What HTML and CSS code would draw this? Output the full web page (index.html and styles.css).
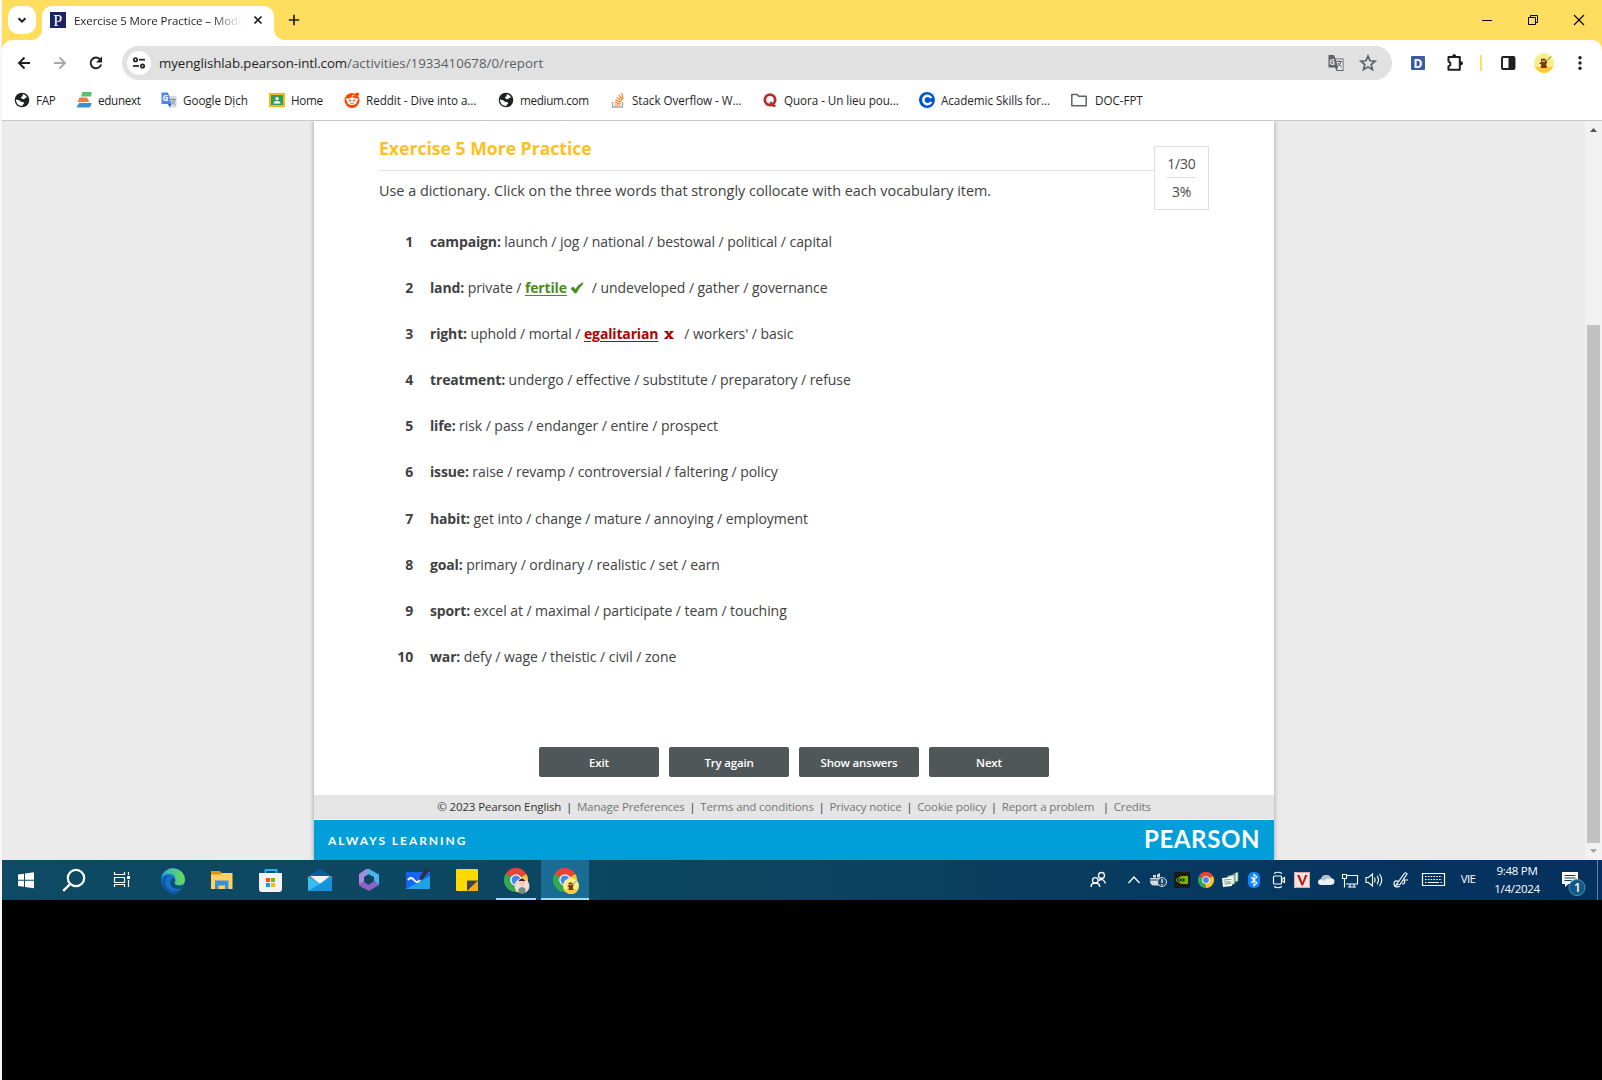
FILE: index.html
```html
<!DOCTYPE html>
<html lang="en">
<head>
<meta charset="utf-8">
<title>Exercise 5 More Practice</title>
<link rel="stylesheet" href="styles.css">
</head>
<body>
<svg class="defs" width="0" height="0" aria-hidden="true">
  <symbol id="chrome" viewBox="0 0 24 24">
    <path fill="#ea4335" d="M12 12 1.6 6A12 12 0 0 1 22.4 6Z"/>
    <path fill="#fbc02d" d="M12 12 22.4 6A12 12 0 0 1 12 24Z"/>
    <path fill="#34a853" d="M12 12 12 24A12 12 0 0 1 1.6 6Z"/>
    <path fill="#ea4335" d="M12 6H22.4L12 6.5Z"/>
    <path fill="#34a853" d="M1.6 6 6.8 15 12 12Z"/>
    <path fill="#fbc02d" d="M17.2 15 12 24 11 17Z"/>
    <circle cx="12" cy="12" r="5.8" fill="#fff"/>
    <circle cx="12" cy="12" r="4.5" fill="#4285f4"/>
  </symbol>
  <symbol id="globe" viewBox="0 0 16 16">
    <circle cx="8" cy="8" r="7.3" fill="#202124"/>
    <path d="M8.600 2.200c2 .2 3.700 1.500 4.500 3.200l-1.800.3-1.200 1.500-2.500-.4-.6-1.800 1.700-.8zM1.900 7.500l3.300.7 1.600 1.600 2.400.2 1 1.300-1.400 1.400-.4 1.200C4.800 14 2 11.400 1.900 7.500z" fill="#fff"/>
  </symbol>
  <symbol id="gorilla" viewBox="0 0 20 20">
    <circle cx="10" cy="10" r="10" fill="#f7ef8c"/>
    <path d="M.8 13.800h18.400A10 10 0 0 1 .8 13.800z" fill="#fbcb3c"/>
    <path d="m11 9.500 6-6" stroke="#8a6a3a"/>
    <path d="M6.800 6.300q2.700-1.800 5 0l.2 2 1.500.8-1.300 1.900.8 4H6.800l.5-3.600-2.300-.9 2.300-1.500z" fill="#7a3a12"/>
    <path d="M8 7.300h3v1.700H8z" fill="#d9a066"/>
  </symbol>
</svg>

<div class="screen">
<header class="tabstrip">
  <div class="tab-search"><svg width="12" height="12" viewBox="0 0 12 12"><path d="M2.500 4.200 6 7.600l3.500-3.400" fill="none" stroke="#1f1f1f" stroke-width="2"/></svg></div>
  <div class="tab">
    <svg width="16" height="16" viewBox="0 0 16 16"><path fill="#1b2460" d="M0 0h16v16H0z"/><text x="3.200" y="13.800" class="pearson-p">P</text></svg>
    <span class="tab-title">Exercise 5 More Practice – Mode</span>
    <svg width="10" height="10" viewBox="0 0 10 10"><path d="m1.500 1.500 7 7m0-7-7 7" stroke="#1f1f1f" stroke-width="1.700"/></svg>
  </div>
  <svg class="newtab" width="12" height="12" viewBox="0 0 12 12"><path d="M6 .8v10.400M.8 6h10.400" stroke="#1f1f1f" stroke-width="1.700"/></svg>
  <div class="window-controls">
    <svg width="46" height="40"><path d="M18 20.500h10" stroke="#000"/></svg>
    <svg width="46" height="40"><path d="M18.500 17.500h7v7h-7zM20.500 17.500v-2h7v7h-2" fill="none" stroke="#000"/></svg>
    <svg width="46" height="40"><path d="m18 15 10 10m0-10L18 25" stroke="#000" stroke-width="1.100"/></svg>
  </div>
</header>

<nav class="toolbar">
  <svg class="nav-btn" width="36" height="36" viewBox="0 0 36 36"><path d="M24 18H13m5.500-5.500L13 18l5.500 5.500" fill="none" stroke="#1f1f1f" stroke-width="1.900"/></svg>
  <svg class="nav-btn" width="36" height="36" viewBox="0 0 36 36"><path d="M12 18h11m-5.500-5.500L23 18l-5.500 5.500" fill="none" stroke="#a8a8a8" stroke-width="1.900"/></svg>
  <svg class="nav-btn" width="36" height="36" viewBox="0 0 36 36"><path d="M22.300 14.500A5.400 5.400 0 1 0 23.200 19.500" fill="none" stroke="#1f1f1f" stroke-width="1.900"/><path d="M24 11.500v6h-6z" fill="#1f1f1f"/></svg>
  <div class="omnibox">
    <svg class="site-info" width="24" height="24" viewBox="0 0 24 24"><circle cx="12" cy="12" r="12" fill="#fff"/><g fill="none" stroke="#1f1f1f" stroke-width="1.700"><circle cx="8.500" cy="8.700" r="1.700"/><path d="M12 8.700h6"/><circle cx="15.500" cy="15" r="1.700"/><path d="M6 15h6"/></g></svg>
    <span class="url"><span class="host">myenglishlab.pearson-intl.com</span><span class="path">/activities/1933410678/0/report</span></span>
    <svg width="18" height="18" viewBox="0 0 18 18"><path d="M1.500 1H7l1.500 3.500h8V17H9.500L8 13.500H1.500z" fill="#5f6368"/><path d="M9 5.300h6.700v10.800h-5.700l1-2.600z" fill="#e1e1e1"/><path d="M10 7.500h5M12.300 6.500v1M14 7.500q-.5 3-3.500 4.500M11 9l3.500 4" stroke="#5f6368" fill="none"/><text x="2.200" y="10.800" class="g-glyph">G</text></svg>
    <svg class="star" width="18" height="18" viewBox="0 0 18 18"><path d="m9 2 2 4.800 5.200.4-4 3.400 1.300 5.100L9 12.900l-4.500 2.800 1.300-5.100-4-3.400 5.200-.4z" fill="none" stroke="#5f6368" stroke-width="1.700"/></svg>
  </div>
  <div class="actions">
    <svg width="36" height="24" viewBox="0 0 36 24"><rect x="11" y="5" width="14" height="14" rx="1" fill="#3b5ba5"/><text x="13.400" y="16.500" class="d-glyph">D</text></svg>
    <svg width="36" height="24" viewBox="0 0 36 24"><path d="M12.500 6h11.300v12.800H12.500v-3.500q2-.6 2-2.400t-2-2.400z" fill="none" stroke="#1f1f1f" stroke-width="2" stroke-linejoin="round"/><path d="M16 5.500q.3-2.500 2.200-2.500t2.200 2.500zM24 10q3 .3 3 2.300t-3 2.300z" fill="#1f1f1f"/></svg>
    <svg width="18" height="24" viewBox="0 0 18 24"><path d="M8 4h2v16H8z" fill="#ffdd5e"/></svg>
    <svg width="36" height="24" viewBox="0 0 36 24"><rect x="12" y="6" width="12.500" height="12" rx="1" fill="none" stroke="#1f1f1f" stroke-width="1.900"/><path d="M18.500 6h6v12h-6z" fill="#1f1f1f"/></svg>
    <svg width="36" height="24" viewBox="0 0 36 24"><use href="#gorilla" x="8" y="2" width="20" height="20"/></svg>
    <svg width="36" height="24" viewBox="0 0 36 24"><g fill="#1f1f1f"><circle cx="18" cy="6.800" r="1.700"/><circle cx="18" cy="12" r="1.700"/><circle cx="18" cy="17.200" r="1.700"/></g></svg>
  </div>
</nav>

<nav class="bookmarks">
  <a><svg width="16" height="16"><use href="#globe"/></svg><span class="tight">FAP</span></a>
  <a><svg width="16" height="16" viewBox="0 0 16 16"><path d="M6.500 0H15q1 0 .6 1.500L15 4.500H5z" fill="#5bbf74"/><path d="M3.500 5.500h7.500l2.500 4.500H1.500z" fill="#f47b42"/><path d="M3 11h12.500q-.5 4.500-3 4.500H.5z" fill="#3b8fd0"/></svg><span class="tight">edunext</span></a>
  <a><svg width="16" height="16" viewBox="0 0 16 16"><path d="M6 4h9.500v11.500H8.500z" fill="#d5d8dc"/><path d="M.5.500h6.500l3.500 11.500H.5z" fill="#4a86ee"/><path d="m8.500 15.500 2-3.500H7z" fill="#2c5fc4"/><path d="M9.800 7.500h5M12.300 6.500v1M14 7.500q-.7 3-3.500 4.500M11 9l3.500 4" stroke="#78909c" fill="none"/><text x="1.600" y="9" class="g-white">G</text></svg><span>Google Dịch</span></a>
  <a><svg width="16" height="16" viewBox="0 0 16 16"><path d="M0 1h16v14H0z" fill="#f5ba15"/><path d="M2 3h12v10H2z" fill="#2f9e5b"/><circle cx="8" cy="6.700" r="1.600" fill="#fff"/><path d="M4.500 11.500q0-2.500 3.500-2.500t3.500 2.500z" fill="#fff"/></svg><span class="tight">Home</span></a>
  <a><svg width="16" height="16" viewBox="0 0 16 16"><circle cx="8" cy="8.500" r="7.500" fill="#ff4500"/><circle cx="13.300" cy="2.300" r="1.800" fill="#ff4500"/><ellipse cx="8" cy="9.300" rx="5" ry="3.700" fill="#fff"/><circle cx="3.200" cy="7.500" r="1.300" fill="#fff"/><circle cx="12.800" cy="7.500" r="1.300" fill="#fff"/><path d="m8 5.800.7-2.800 2.300.5" stroke="#fff" stroke-width=".8" fill="none"/><circle cx="6" cy="8.600" r="1" fill="#ff4500"/><circle cx="10" cy="8.600" r="1" fill="#ff4500"/><path d="M6 10.900q2 1.200 4 0" stroke="#ff4500" fill="none" stroke-width=".8"/></svg><span>Reddit - Dive into a...</span></a>
  <a><svg width="16" height="16"><use href="#globe"/></svg><span class="tight">medium.com</span></a>
  <a><svg width="16" height="16" viewBox="0 0 16 16"><path d="M2.500 10v5h10v-5" fill="none" stroke="#a5a7aa" stroke-width="1.300"/><path d="M4.500 13h6M4.600 10.700l6 .7M5.300 8l5.600 2M6.700 5.300l4.900 3.500M9 2.800l3.400 5M11.800 1l1.300 5.800" stroke="#f48024" stroke-width="1.200"/></svg><span>Stack Overflow - W...</span></a>
  <a><svg width="16" height="16" viewBox="0 0 16 16"><circle cx="8" cy="7.800" r="5.200" fill="none" stroke="#b92b27" stroke-width="2.800"/><path d="m7.500 10 2-.8 1.500 3.500 2.800.5-.3 1.500q-3 1-4.200-1.500z" fill="#b92b27"/></svg><span>Quora - Un lieu pou...</span></a>
  <a><svg width="16" height="16" viewBox="0 0 16 16"><circle cx="8" cy="8" r="8" fill="#0056d2"/><path d="M12.200 6A4.200 4.200 0 1 0 12.200 10" fill="none" stroke="#fff" stroke-width="2.500"/></svg><span>Academic Skills for...</span></a>
  <a class="folder"><svg width="16" height="16" viewBox="0 0 16 16"><path d="M.8 13.700V2.500h5.400l1.500 1.800h7.500v9.400z" fill="none" stroke="#5f6368" stroke-width="1.500" stroke-linejoin="round"/></svg><span>DOC-FPT</span></a>
</nav>

<main class="viewport">
  <section class="sheet">
    <div class="exercise">
      <div class="intro">
        <h1>Exercise 5 More Practice</h1>
        <p>Use a dictionary. Click on the three words that strongly collocate with each vocabulary item.</p>
        <div class="score"><span>1/30</span><span>3%</span></div>
      </div>
      <ol class="items">
        <li><b class="num">1</b><b>campaign:</b> launch / jog / national / bestowal / political / capital</li>
        <li><b class="num">2</b><b>land:</b> private / <b class="right">fertile</b><svg class="tick" width="14" height="12" viewBox="0 0 14 12"><path d="M1 6.500 3.200 5l2.300 2.500Q8 3 12.500.700L13 1.800Q9 5.500 6.200 11H4.800z" fill="#4c8a1e" stroke="#4c8a1e" stroke-width=".7"/></svg>/ undeveloped / gather / governance</li>
        <li><b class="num">3</b><b>right:</b> uphold / mortal / <b class="wrong">egalitarian</b><svg class="cross" width="10" height="10" viewBox="0 0 10 10"><path d="M.3 1h4v1L5 3.200 6 2V1h3.500v1.200h-.8L6.200 5l2.500 2.800h1V9H5.500V8L4.800 6.800 3.700 8v1H.3V7.800h.8L3.700 5 1.300 2.200h-1z" fill="#b20000"/></svg>/ workers' / basic</li>
        <li><b class="num">4</b><b>treatment:</b> undergo / effective / substitute / preparatory / refuse</li>
        <li><b class="num">5</b><b>life:</b> risk / pass / endanger / entire / prospect</li>
        <li><b class="num">6</b><b>issue:</b> raise / revamp / controversial / faltering / policy</li>
        <li><b class="num">7</b><b>habit:</b> get into / change / mature / annoying / employment</li>
        <li><b class="num">8</b><b>goal:</b> primary / ordinary / realistic / set / earn</li>
        <li><b class="num">9</b><b>sport:</b> excel at / maximal / participate / team / touching</li>
        <li><b class="num">10</b><b>war:</b> defy / wage / theistic / civil / zone</li>
      </ol>
      <div class="buttons"><button>Exit</button><button>Try again</button><button>Show answers</button><button>Next</button></div>
    </div>
    <div class="legal"><span>© 2023 Pearson English</span><i>|</i><a>Manage Preferences</a><i>|</i><a>Terms and conditions</a><i>|</i><a>Privacy notice</a><i>|</i><a>Cookie policy</a><i>|</i><a>Report a problem</a><i class="wide">|</i><a>Credits</a></div>
    <div class="brand"><span class="tagline">ALWAYS LEARNING</span><span class="logo">PEARSON</span></div>
  </section>
  <div class="scrollbar">
    <svg width="17" height="17"><path d="m5 11 3.500-4 3.500 4z" fill="#505050"/></svg>
    <div class="thumb"></div>
    <svg width="17" height="17"><path d="m5 6 3.500 4L12 6z" fill="#a3a3a3"/></svg>
  </div>
</main>

<footer class="taskbar">
  <div class="apps">
    <svg width="48" height="40"><path d="m16 14.500 6-.8v6h-6zM23 13.500l9-1.300v7.500h-9zM16 20.700h6v6l-6-.8zM23 20.700h9v7.500l-9-1.300z" fill="#fff"/></svg>
    <svg width="48" height="40"><circle cx="26" cy="18" r="8.200" fill="none" stroke="#fff" stroke-width="2.200"/><path d="m20.200 24-7 6.800" stroke="#fff" stroke-width="2.400"/></svg>
    <svg width="48" height="40"><path d="M16.500 12v2.500h10V12M16.500 27v-2.500h10V27M16.500 17.500h10v5h-10zM30.500 12v3M30.500 20v7" fill="none" stroke="#fff" stroke-width="1.200"/><path d="M29 16h3v3h-3z" fill="#fff"/></svg>
    <svg width="52" height="40" viewBox="0 0 52 40"><defs><linearGradient id="e1" x1="0" x2="1"><stop stop-color="#2aa8e0"/><stop offset="1" stop-color="#6be04a"/></linearGradient></defs><circle cx="27" cy="20" r="12" fill="#1672c9"/><path d="M15.200 18A12 12 0 0 1 39 20q0 5-6 5-4.500 0-4.500-2 1.500-1.500 1-4-1-5-7-5-5 .2-7.300 4z" fill="url(#e1)"/><path d="M22 15.500q-6 8 .5 13.500 6 4 13.500-.5-7 11.500-17 1Q12 18 22 15.500z" fill="#0c59a4"/><path d="M28.500 23q0 3 5.500 3 3.500-.3 4.300-1.800l-2.300 4q-9 2.500-11.500-4-1-5 3-6.200 2.500 2.500 1 5z" fill="#104d77"/></svg>
    <svg width="48" height="40"><path d="M13 11h9l2 2.500h10V16H13z" fill="#d9960f"/><path d="M13 14.500h9l2-1.500h10.500v16H13z" fill="#fdd262"/><path d="M17 29v-8.500h13.500V29h-3.500v-3.500h-6.500V29z" fill="#3f8fd6"/></svg>
    <svg width="49" height="40"><path d="M19.500 15v-5h11v5" fill="none" stroke="#25b4ec" stroke-width="1.800"/><path d="M13 13h23v16q0 3-3 3H16q-3 0-3-3z" fill="#f3f3f3"/><path d="M20 18h4v4h-4z" fill="#f25022"/><path d="M25 18h4v4h-4z" fill="#7fba00"/><path d="M20 23h4v4h-4z" fill="#00a4ef"/><path d="M25 23h4v4h-4z" fill="#ffb900"/></svg>
    <svg width="49" height="40"><path d="m13 16 12-7 12 7-12 8z" fill="#0c59a4"/><path d="M15 16h20l-10 8z" fill="#f2f2f2"/><path d="m13 16 12 7.500L37 16v15H13z" fill="#35bdf0"/><path d="m15 16 10 7.500L35 16z" fill="#f2f2f2"/><path d="m13 31 24-14v14z" fill="#1493df"/></svg>
    <svg width="49" height="40"><path d="m22 9-7 5v11l5 3.500V17l6-3.500V9z" fill="#a58be0"/><path d="m25 9 10 5.500V25l-5-3v-5L22 13z" fill="#49b5ea"/><path d="m15 25.500 10 5.500 10-6-4.500-4.500-6 4.500-5-3.500-4.500 2z" fill="#8a63c4"/><path d="m20.500 17 4-2.500 5 3v3.500l-4.500 3-4.500-2.500z" fill="#0e4661"/></svg>
    <svg width="49" height="40"><path d="M13 12h24v17H13z" fill="#1764ee"/><path d="M13 29h24V16z" fill="#1fa3e6"/><path d="M15 20q3-4 6 0t6 0" fill="none" stroke="#fff" stroke-width="2"/><path d="m33 8 3.500 2-6.500 9-3.500 1 .5-3.500z" fill="#30303a"/></svg>
    <svg width="49" height="40"><rect x="14" y="9" width="22" height="22" rx="1" fill="#ffd900"/><path d="m36 20-11 11h10q1 0 1-1z" fill="#f5ac0d"/><path d="M25 20.500h11L25 31z" fill="#41414a"/></svg>
    <div class="app open"><svg width="40" height="38"><use href="#chrome" x="8" y="8" width="24" height="24"/><circle cx="26" cy="26" r="7.500" fill="#f4dad6"/><circle cx="26" cy="22.500" r="3" fill="#f6c6b4"/><path d="M22.500 21q3.500-5 7 0z" fill="#2b2524"/><path d="M22.500 33v-4q3.500-4 7 0v4z" fill="#6f8f80"/></svg></div>
    <div class="app active"><svg width="48" height="38"><use href="#chrome" x="12" y="8" width="24" height="24"/><use href="#gorilla" x="22" y="18" width="16" height="16"/></svg></div>
  </div>
  <div class="tray">
    <svg class="people" width="36" height="40" viewBox="0 0 36 40"><g fill="none" stroke="#fff" stroke-width="1.300"><circle cx="21.500" cy="15.500" r="3"/><path d="M18.500 20.500q5-3 7 3"/><circle cx="15.300" cy="20.500" r="2.800"/><path d="M11 27q0-4 4.300-4t4.500 4"/></g></svg>
    <svg width="24" height="40"><path d="m6.500 23 5.500-6 5.500 6" fill="none" stroke="#fff" stroke-width="1.300"/></svg>
    <svg width="24" height="40"><path d="M4 18h11v1.500H4zM4 20.500h10v2l-1 3H7q-3-1-3-5zM7 15h3v2.500H7zM11 14.500l3-1.500v4.500h-3z" fill="#d5dce0"/><circle cx="16" cy="22" r="4.500" fill="#1b4963" stroke="#d5dce0"/><path d="M16 19v4m0 1v1.200" stroke="#fff" stroke-width="1.200"/></svg>
    <svg width="24" height="40"><path d="M4 12h16v16H4z" fill="#1b1b1b"/><path d="M10.500 16H18v8h-7.500z" fill="#76b900"/><path d="M6 20q4.500-5.500 10 0-5.500 5.500-10 0z" fill="#1b1b1b" stroke="#76b900"/><circle cx="11" cy="20" r="1.700" fill="none" stroke="#76b900"/></svg>
    <svg width="24" height="40"><use href="#chrome" x="4" y="12" width="16" height="16"/></svg>
    <svg width="24" height="40"><path d="m15 14 5-2v9l-5 2z" fill="#e8f5ea" stroke="#3c9a5a" stroke-width=".7"/><path d="m9 16 8-2v10l-4 1z" fill="#c9ded0" stroke="#244a3a" stroke-width=".7"/><path d="m4 18 11-1-1 9-9 1z" fill="#fff"/><path d="m5.500 20 8-.5M6 22h7.500M6.500 24l6.500-.5" stroke="#6c9b82"/></svg>
    <svg width="24" height="40"><rect x="6" y="12" width="12" height="16" rx="5" fill="#0a84ff"/><path d="m9 17 6 6-3 2.800V14.200l3 2.800-6 6" fill="none" stroke="#fff" stroke-width="1.100"/></svg>
    <svg width="24" height="40"><rect x="7.500" y="16" width="8" height="8" rx="1" fill="none" stroke="#fff" stroke-width="1.200"/><path d="m15.500 19.500 3-2v5l-3-2M8 13.500q4-2.500 8 0M8 26.500q4 2.500 8 0" fill="none" stroke="#fff" stroke-width="1.200"/></svg>
    <svg width="24" height="40"><path d="M4 12h16v16H4z" fill="#fbe5e1"/><path d="M4.500 12.500h15v15h-15z" fill="none" stroke="#e3a79f"/><path d="M7 15h2.500l3 7.500L15 15h2.500L13 25.500h-1.500z" fill="#c01818"/></svg>
    <svg width="24" height="40"><path d="M7 25q-3-.5-3-3t3-3q1-4 5-4t5 3q3.500.5 3.500 3.500T17 25z" fill="#eef2f5"/><path d="M7 19.500q2-5 6.500-4 3 1 3.500 3.500-5-1.500-7 2z" fill="#aebccb"/></svg>
    <svg width="24" height="40"><path d="M8 15.500h11.500v8.500H8M12 24v3m4-3v3m-6 0h8M4.500 14.500h4v4h-4zM6.500 18.500v9" fill="none" stroke="#fff" stroke-width="1.100"/></svg>
    <svg width="24" height="40"><path d="M4 17.500h2.500l4-3.500v12l-4-3.500H4zM12.500 17.500q1.500 2.500 0 5M15 15.800q3 4.200 0 8.400M17.500 14q4.500 6 0 12" fill="none" stroke="#fff" stroke-width="1.100"/></svg>
    <svg width="32" height="40"><path d="m10 25 8-11q2-2.500 3 0L14 24.500zM12 21q-4-1-4 3t6 2.500M16 24q4 0 2-4h4" fill="none" stroke="#fff" stroke-width="1.200"/></svg>
    <svg width="30" height="40"><path d="M4.500 13.500h22v12h-22z" fill="none" stroke="#fff" stroke-width="1.200"/><path d="M7 16.500h17M7 19.500h17" stroke="#fff" stroke-width="1.200" stroke-dasharray="1.600 1.200"/><path d="M7 22.500h1.500m1.500 0h11m1.500 0H24" stroke="#fff" stroke-width="1.200"/></svg>
    <span class="lang">VIE</span>
    <div class="clock"><span>9:48 PM</span><span>1/4/2024</span></div>
    <svg class="notices" width="36" height="40"><path d="M11 12h16v12H17.500L14 27v-3h-3z" fill="#fff"/><path d="M13.500 15.500h11M13.500 18h11M13.500 20.500h7" stroke="#0a3b63"/><circle cx="26" cy="27.500" r="8" fill="#125884" stroke="#4f93b8"/><text x="23" y="31.800" class="count">1</text></svg>
    <i class="peek"></i>
  </div>
</footer>
</div>
</body>
</html>
```
FILE: styles.css
```css
*{box-sizing:border-box}
body{margin:0;background:#000;font-family:"Open Sans","Noto Sans",sans-serif;color:#1f1f1f;overflow:hidden}
svg{display:block;flex:none}
.defs{position:absolute}
.screen{width:1602px;height:1080px;border-left:2px solid #f7f7f7;display:flex;flex-direction:column}

.tabstrip{height:50px;margin-bottom:-10px;background:#ffdd5e;display:flex;align-items:flex-start;padding-left:6px}
.tab-search{width:28px;height:28px;margin-top:6px;border-radius:10px;background:#fff;display:flex;align-items:center;justify-content:center}
.tab{position:relative;width:232px;height:34px;margin:6px 0 0 6px;padding:0 11px 6px 8px;border-radius:10px 10px 0 0;background:#fff;display:flex;align-items:center}
.tab::before,.tab::after{content:"";position:absolute;bottom:0;width:10px;height:10px}
.tab::before{left:-10px;background:radial-gradient(circle at 0 0,transparent 9.5px,#fff 10px)}
.tab::after{right:-10px;background:radial-gradient(circle at 100% 0,transparent 9.5px,#fff 10px)}
.tab-title{width:168px;margin:0 auto 0 8px;overflow:hidden;white-space:nowrap;font-size:11.5px;letter-spacing:-.08px;-webkit-mask-image:linear-gradient(90deg,#000 138px,transparent 168px);mask-image:linear-gradient(90deg,#000 138px,transparent 168px)}
.pearson-p{font:16px "Liberation Serif",serif;fill:#fff}
.newtab{margin:14px 0 0 14px}
.window-controls{display:flex;margin-left:auto}

.toolbar{position:relative;height:46px;background:#fff;display:flex;align-items:center;padding:0 2px 0 4px;border-radius:10px 10px 0 0}
.omnibox{width:1270px;height:34px;margin-left:8px;padding:0 15px 0 5px;border-radius:17px;background:#e1e1e1;display:flex;align-items:center}
.site-info{margin-right:8px}
.url{flex:1;font-size:13.3px;white-space:nowrap}
.host{letter-spacing:-.08px}
.path{color:#5c5f63}
.star{margin-left:14px}
.actions{display:flex;margin-left:8px;align-items:center}
.g-glyph{font:bold 8px "Open Sans",sans-serif;fill:#e1e1e1}
.g-white{font:bold 8px "Open Sans",sans-serif;fill:#fff}
.d-glyph{font:bold 12px "Open Sans",sans-serif;fill:#fff}

.bookmarks{height:35px;background:#fff;border-bottom:1px solid #c8c8c8;padding:0 0 7px 12px;display:grid;align-items:center;grid-template-columns:62px 85px 108px 75px 154px 112px 152px 157px 152px auto}
.bookmarks a{display:flex;align-items:center;gap:6px;font-size:11.7px;letter-spacing:-.07px;white-space:nowrap}
.bookmarks .tight{letter-spacing:-.33px}
.bookmarks .folder{gap:8px}

.viewport{height:739px;background:#ebebeb;display:flex}
.sheet{width:960px;margin-left:312px;background:#fff;box-shadow:0 0 5px rgba(0,0,0,.35);clip-path:inset(0 -6px);display:flex;flex-direction:column;color:#414141}
.exercise{height:674px;padding:15px 65px 0}
.intro{position:relative;height:96px}
h1{margin:0;height:35px;border-bottom:1px solid #e0e0e0;font-size:17.6px;line-height:24px;color:#ffc01e}
.intro p{margin:8px 0 0;font-size:14.4px;line-height:24px;white-space:nowrap}
.score{position:absolute;top:10px;right:0;width:55px;height:64px;border:1px solid #dedede;background:#fff;display:flex;flex-direction:column;align-items:center;font-size:14px;letter-spacing:-.2px;color:#4a4a4a}
.score span{line-height:20px;padding:7px 1px 3px}
.score span+span{border-top:1px solid #dedede;padding:4px 5px 0}
.items{list-style:none;margin:0;padding:0;height:520px;font-size:14px;line-height:20px;letter-spacing:-.055px}
.items li{height:46.1px;white-space:pre}
.items b{letter-spacing:-.15px}
.num{display:inline-block;width:34px;margin-right:17px;text-align:right}
.items .right,.items .wrong{text-decoration:underline;text-underline-offset:2px}
.right{color:#4c8a1e}
.wrong{color:#b20000}
.tick,.cross{display:inline-block;vertical-align:-1px}
.tick{margin:0 8px 0 3px}
.cross{margin:0 10px 0 6px}
.buttons{display:flex;justify-content:center;gap:10px;margin-top:-5px}
.buttons button{width:120px;height:30px;border:0;border-radius:2px;padding:0;background:#505759;color:#fff;font:600 11.5px "Open Sans",sans-serif;letter-spacing:-.18px}
.legal{height:24px;background:#e5e5e5;display:flex;justify-content:center;align-items:center;padding-bottom:2px;font-size:11.5px;letter-spacing:-.12px;color:#333;white-space:nowrap}
.legal i{font-style:normal;width:15.6px;text-align:center}
.legal .wide{width:19.6px;padding-left:4px}
.legal a{color:#757575}
.brand{height:41px;border-top:1px solid #fff;background:#009fda;color:#fff;display:flex;align-items:center;justify-content:space-between;padding:0 14px}
.tagline{font:700 12px Lato,sans-serif;letter-spacing:1.95px}
.logo{font:700 24px/36px Lato,sans-serif;letter-spacing:.6px;padding-bottom:2px}
.scrollbar{width:17px;margin-left:auto;background:#f1f1f1;display:flex;flex-direction:column;align-items:center}
.thumb{width:13px;height:518px;margin-top:auto;background:#c1c1c1}

.taskbar{height:40px;background:linear-gradient(90deg,#0e4a63 0,#0d4560 45%,#073a60 72%,#05305f 100%);display:flex;justify-content:space-between}
.apps{display:flex}
.app{height:40px;border-bottom:2px solid #9bdcff}
.open{width:40px;margin:0 5px}
.active{width:48px;background:#1a6c94}
.tray{display:flex;color:#fff;font-size:11.5px}
.people{margin-right:6px}
.lang{width:40px;line-height:38px;text-align:center;letter-spacing:-.7px}
.clock{width:58px;display:flex;flex-direction:column;align-items:center;letter-spacing:-.3px;line-height:18px;padding-top:2px}
.notices{margin-left:5px}
.peek{width:1px;background:#5f83a3;margin:0 4px 0 10px}
.count{font:600 12px "Open Sans",sans-serif;fill:#fff}
```
